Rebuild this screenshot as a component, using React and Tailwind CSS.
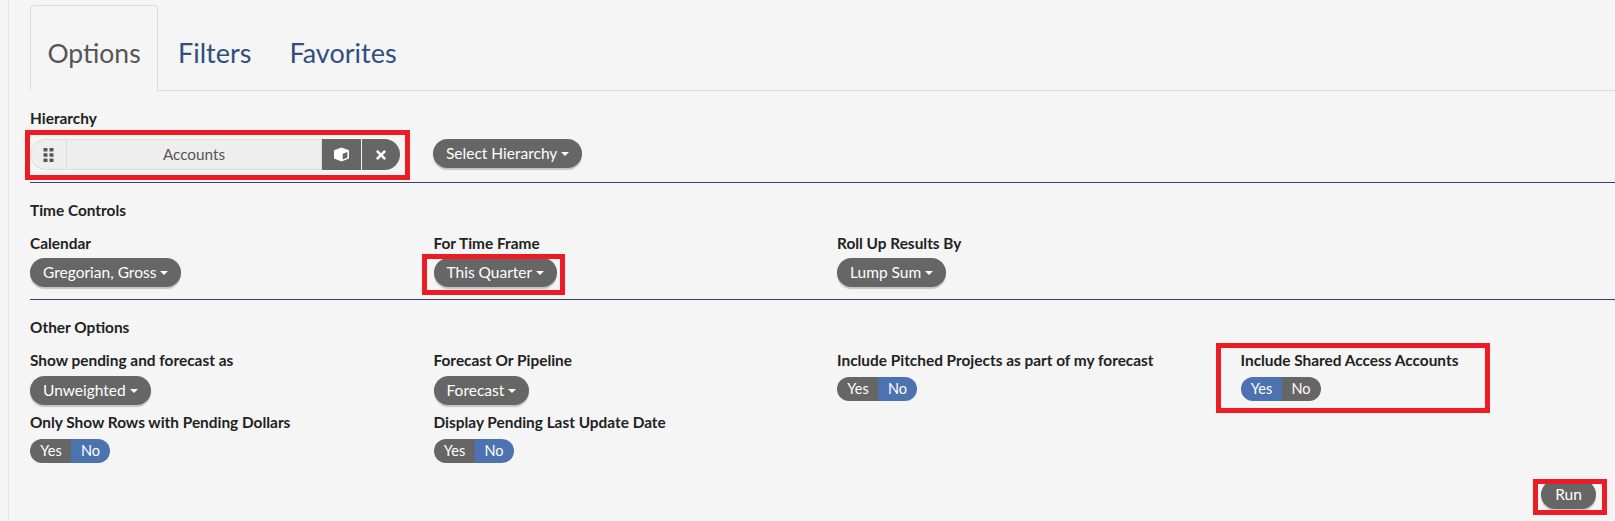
import React from "react";
import { FaTimes } from "react-icons/fa";

function Caret() {
  return <span className="ml-1 inline-block h-0 w-0 border-x-[4px] border-t-[4px] border-x-transparent border-t-white align-middle" />;
}

function Drop({ children, cls = "" }) {
  return (
    <button className={`flex h-[29px] items-center rounded-[15px] bg-[#666666] px-[13px] text-[15.5px] leading-none text-white shadow-[0_2px_1px_#c4c4c4] ${cls}`}>
      {children}
      <Caret />
    </button>
  );
}

function Label({ children, cls = "" }) {
  return <div className={`text-[15.4px] leading-[20px] font-bold text-[#222222] ${cls}`}>{children}</div>;
}

function Toggle({ on }) {
  return (
    <div className="flex h-6 w-20 overflow-hidden rounded-xl text-[14.5px] leading-6 text-white">
      <span className={`w-[41px] pl-[1px] text-center ${on === "yes" ? "bg-[#4c72b0]" : "bg-[#666666]"}`}>Yes</span>
      <span className={`w-[39px] text-center ${on === "no" ? "bg-[#4c72b0]" : "bg-[#666666]"}`}>No</span>
    </div>
  );
}

function Box({ cls }) {
  return <div className={`pointer-events-none absolute border-[5px] border-[#ed1c24] ${cls}`} />;
}

export default function App() {
  return (
    <div className="relative h-[521px] overflow-hidden bg-[#f5f5f5] font-['Lato','Noto_Sans',sans-serif]">
      <div className="ml-[8px] h-full border-l border-[#e4e4e4] pl-[21px]">
        <div className="flex h-[91px] items-end border-b border-[#dddddd] pt-[5px]">
          <div className="-mb-px flex h-[86px] w-[128px] items-center justify-center rounded-t border border-b-0 border-[#dddddd] bg-[#f5f5f5] pt-[10px] text-[26.5px] text-[#555555]">Options</div>
          <div className="flex h-[85px] items-center pt-[12px] pl-[20px] text-[27px] text-[#2f4f7f]">Filters</div>
          <div className="flex h-[85px] items-center pt-[12px] pl-[38px] text-[27px] text-[#2f4f7f]">Favorites</div>
        </div>

        <Label cls="mt-[17px]">Hierarchy</Label>
        <div className="mt-[11px] flex items-start border-b border-[#2f4468] pb-[12px]">
          <div className="flex h-[31px] w-[370px] text-[15.3px]">
            <div className="flex w-[37px] items-center justify-center rounded-l-[16px] border border-[#dddddd] bg-[#eeeeee]">
              <svg width="11" height="14" viewBox="0 0 11 14" fill="#555555">
                <rect x="0.5" y="0" width="4" height="3.6" rx="0.6" /><rect x="6.5" y="0" width="4" height="3.6" rx="0.6" />
                <rect x="0.5" y="5.2" width="4" height="3.6" rx="0.6" /><rect x="6.5" y="5.2" width="4" height="3.6" rx="0.6" />
                <rect x="0.5" y="10.4" width="4" height="3.6" rx="0.6" /><rect x="6.5" y="10.4" width="4" height="3.6" rx="0.6" />
              </svg>
            </div>
            <div className="flex w-[255px] items-center justify-center border-y border-r border-[#dddddd] bg-[#eeeeee] text-[#555555]">Accounts</div>
            <div className="flex w-[39px] items-center justify-center bg-[#666666]">
              <svg width="17" height="15" viewBox="0 0 17 15">
                <path d="M8.5 0.5 L16 3.2 V11.5 L8.5 14.5 L1 11.5 V3.2 Z" fill="#ffffff" />
                <path d="M9.7 6.7 L14.4 4.9 V10.6 L9.7 12.5 Z" fill="#666666" />
              </svg>
            </div>
            <div className="ml-px flex w-[38px] items-center justify-center rounded-r-[16px] bg-[#666666] text-white"><FaTimes size={14} /></div>
          </div>
          <Drop cls="ml-[33px]">Select Hierarchy</Drop>
        </div>

        <Label cls="mt-[17px]">Time Controls</Label>
        <div className="mt-[13px] grid grid-cols-[403.5px_403.5px_403.5px_403.5px] border-b border-[#2f4468] pb-[12px]">
          <div><Label>Calendar</Label><Drop cls="mt-[5px]">Gregorian, Gross</Drop></div>
          <div><Label>For Time Frame</Label><Drop cls="mt-[5px]">This Quarter</Drop></div>
          <div><Label>Roll Up Results By</Label><Drop cls="mt-[5px]">Lump Sum</Drop></div>
        </div>

        <Label cls="mt-[17px]">Other Options</Label>
        <div className="mt-[13px] grid grid-cols-[403.5px_403.5px_403.5px_403.5px]">
          <div>
            <Label>Show pending and forecast as</Label><Drop cls="mt-[6px]">Unweighted</Drop>
            <Label cls="mt-[7px]">Only Show Rows with Pending Dollars</Label><div className="mt-[7px]"><Toggle on="no" /></div>
          </div>
          <div>
            <Label>Forecast Or Pipeline</Label><Drop cls="mt-[6px]">Forecast</Drop>
            <Label cls="mt-[7px]">Display Pending Last Update Date</Label><div className="mt-[7px]"><Toggle on="no" /></div>
          </div>
          <div><Label>Include Pitched Projects as part of my forecast</Label><div className="mt-[7px]"><Toggle on="no" /></div></div>
          <div><Label>Include Shared Access Accounts</Label><div className="mt-[7px]"><Toggle on="yes" /></div></div>
        </div>
      </div>

      <button className="absolute top-[480px] left-[1541px] h-[29px] w-[55px] rounded-[15px] bg-[#666666] text-[15.5px] text-white shadow-[0_2px_1px_#c4c4c4]">Run</button>

      <Box cls="top-[130px] left-[25px] h-[50px] w-[385px]" />
      <Box cls="top-[254px] left-[422px] h-[41px] w-[143px]" />
      <Box cls="top-[343px] left-[1216px] h-[70px] w-[274px]" />
      <Box cls="top-[479px] left-[1533px] h-[36px] w-[74px]" />
    </div>
  );
}
